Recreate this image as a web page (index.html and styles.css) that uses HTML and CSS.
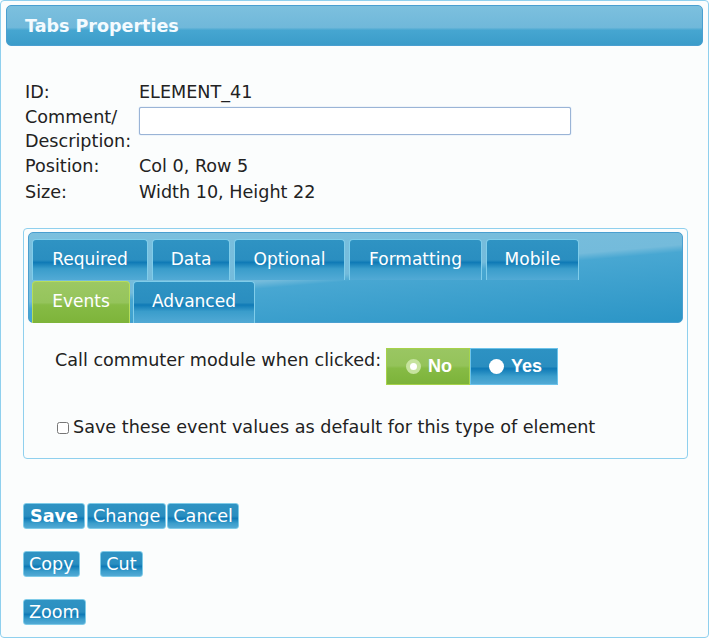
FILE: index.html
```html
<!DOCTYPE html>
<html lang="en">

<head>
    <meta charset="UTF-8">
    <title>Tabs Properties</title>
    <link rel="stylesheet" href="styles.css">
</head>

<body>
    <div class="dialog">
        <!-- title bar -->
        <div class="title-bar">Tabs Properties</div>

        <!-- element info -->
        <table class="info">
            <tr>
                <td class="lbl">ID:</td>
                <td>ELEMENT_41</td>
            </tr>
            <tr>
                <td class="lbl">Comment/<br>Description:</td>
                <td class="top"><input type="text" class="comment"></td>
            </tr>
            <tr>
                <td class="lbl">Position:</td>
                <td>Col 0, Row 5</td>
            </tr>
            <tr>
                <td class="lbl">Size:</td>
                <td>Width 10, Height 22</td>
            </tr>
        </table>

        <!-- tabs -->
        <div class="tab-box">
            <div class="tab-head">
                <div class="tab-row">
                    <span class="tab w-req">Required</span>
                    <span class="tab w-data">Data</span>
                    <span class="tab w-opt">Optional</span>
                    <span class="tab w-fmt">Formatting</span>
                    <span class="tab w-mob">Mobile</span>
                </div>
                <div class="tab-row second">
                    <span class="tab active w-evt">Events</span>
                    <span class="tab w-adv">Advanced</span>
                </div>
            </div>

            <div class="tab-body">
                <div class="call-row">
                    <span>Call commuter module when clicked:</span>
                    <div class="toggle">
                        <span class="opt on"><i class="radio"></i>No</span>
                        <span class="opt"><i class="radio"></i>Yes</span>
                    </div>
                </div>
                <label class="save-default">
                    <input type="checkbox">Save these event values as default for this type of element
                </label>
            </div>
        </div>

        <!-- buttons -->
        <div class="btn-row">
            <button class="btn bold">Save</button><button class="btn">Change</button><button class="btn">Cancel</button>
        </div>
        <div class="btn-row gap">
            <button class="btn">Copy</button>
            <button class="btn">Cut</button>
        </div>
        <div class="btn-row">
            <button class="btn">Zoom</button>
        </div>
    </div>
</body>

</html>
```

FILE: styles.css
```css
/* base */
body {
    margin: 0;
    font-family: "DejaVu Sans", Verdana, sans-serif;
    font-size: 17.6px;
    color: #222;
    background: #fff;
}

.dialog {
    box-sizing: border-box;
    width: 709px;
    height: 638px;
    border: 1px solid #8fd0ee;
    border-radius: 4px;
    background: #fbfdfd;
    padding: 4px 5px 0 5px;
}

/* title bar */
.title-bar {
    height: 41px;
    border-radius: 5px;
    border: 1px solid #4a9fd0;
    box-sizing: border-box;
    background: linear-gradient(to bottom, #7cc0de 0%, #70b8da 55%, #46a6d1 62%, #3b9cc9 100%);
    color: #f4fbff;
    font-weight: bold;
    font-size: 17.5px;
    padding: 10px 0 0 18px;
}

/* info table */
.info {
    border-collapse: collapse;
    margin: 33px 0 0 19px;
}

.info td {
    padding: 0;
    height: 26px;
    vertical-align: middle;
}

.info td.lbl {
    width: 114px;
    line-height: 24px;
}

.info td.top {
    vertical-align: top;
}

.comment {
    box-sizing: border-box;
    width: 432px;
    height: 28px;
    margin-top: 2px;
    border: 1px solid #9ab4d6;
    border-radius: 2px;
    box-shadow: 0 0 1px #7aa7e0;
}

/* tab box */
.tab-box {
    margin: 23px 0 0 17px;
    width: 665px;
    height: 231px;
    box-sizing: border-box;
    border: 1px solid #8fd0ee;
    border-radius: 4px;
    padding: 3px 4px 0 4px;
}

.tab-head {
    height: 91px;
    box-sizing: border-box;
    border-radius: 5px;
    border: 1px solid #4a9fd0;
    background: linear-gradient(175deg, #7cc0de 0%, #74bbdb 47%, #48a7d2 52%, #2b95c6 100%);
    padding: 6px 0 0 3px;
}

.tab-row {
    display: flex;
    gap: 4px;
    height: 41px;
}

.tab-row.second {
    gap: 3px;
    height: 42px;
    margin-top: 1px;
}

.tab {
    box-sizing: border-box;
    height: 100%;
    border: 1px solid #80cdea;
    border-bottom: none;
    border-radius: 4px 4px 0 0;
    background: linear-gradient(to bottom, #2f93c3 0%, #2a8ec0 50%, #0f7ab6 56%, #3a9dcb 72%, #52aad5 100%);
    color: #fff;
    font-size: 17px;
    text-align: center;
    line-height: 39px;
}

.tab.active {
    border-color: #b6dd5a;
    background: linear-gradient(to bottom, #9cc863 0%, #95c45c 50%, #86bb45 56%, #7db43a 100%);
}

.w-req { width: 116px; }
.w-data { width: 78px; }
.w-opt { width: 111px; }
.w-fmt { width: 133px; }
.w-mob { width: 93px; }
.w-evt { width: 98px; }
.w-adv { width: 122px; }

/* tab body */
.tab-body {
    padding: 25px 0 0 27px;
}

.call-row {
    display: flex;
    align-items: center;
    gap: 5px;
}

.call-row > span {
    margin-top: -14px;
}

.toggle {
    display: flex;
    height: 37px;
}

.opt {
    box-sizing: border-box;
    display: flex;
    align-items: center;
    gap: 7px;
    height: 37px;
    padding-left: 18px;
    width: 88px;
    border: 1px solid #6cc3ea;
    background: linear-gradient(to bottom, #2d92c3 0%, #2a8ec0 50%, #0f7ab6 56%, #3a9dcb 78%, #52aad5 100%);
    color: #fff;
    font-family: "Liberation Sans", Arial, sans-serif;
    font-size: 18px;
    font-weight: bold;
}

.opt.on {
    width: 84px;
    padding-left: 19px;
    border-color: #a6d24a;
    background: linear-gradient(to bottom, #9ac662 0%, #94c35a 48%, #86bb45 55%, #7cb33a 100%);
}

.radio {
    display: inline-block;
    width: 15px;
    height: 15px;
    border-radius: 50%;
    background: #fff;
}

.opt.on .radio {
    box-sizing: border-box;
    border: 4px solid #c6e39e;
    background: #fff;
}

.save-default {
    display: block;
    margin-top: 32px;
    margin-left: 2px;
}

.save-default input {
    width: 12px;
    height: 12px;
    margin: 0 4px 0 0;
    vertical-align: -1px;
}

/* buttons */
.btn-row {
    margin: 44px 0 0 17px;
    height: 26px;
}

.btn-row + .btn-row {
    margin-top: 22px;
}

.btn-row.gap .btn + .btn {
    margin-left: 14px;
}

.btn {
    box-sizing: border-box;
    height: 26px;
    padding: 0 5px;
    margin: 0 1px 0 0;
    border: 1px solid #7fcbe8;
    border-radius: 3px;
    background: linear-gradient(to bottom, #2f93c3 0%, #2a8ec0 50%, #0f7ab6 60%, #3a9dcb 80%, #52aad5 100%);
    color: #fff;
    font-family: "DejaVu Sans", Verdana, sans-serif;
    font-size: 17.6px;
    line-height: 22px;
    vertical-align: top;
}

.btn.bold {
    font-weight: bold;
    padding: 0 6px;
    margin-right: 2px;
}
```
